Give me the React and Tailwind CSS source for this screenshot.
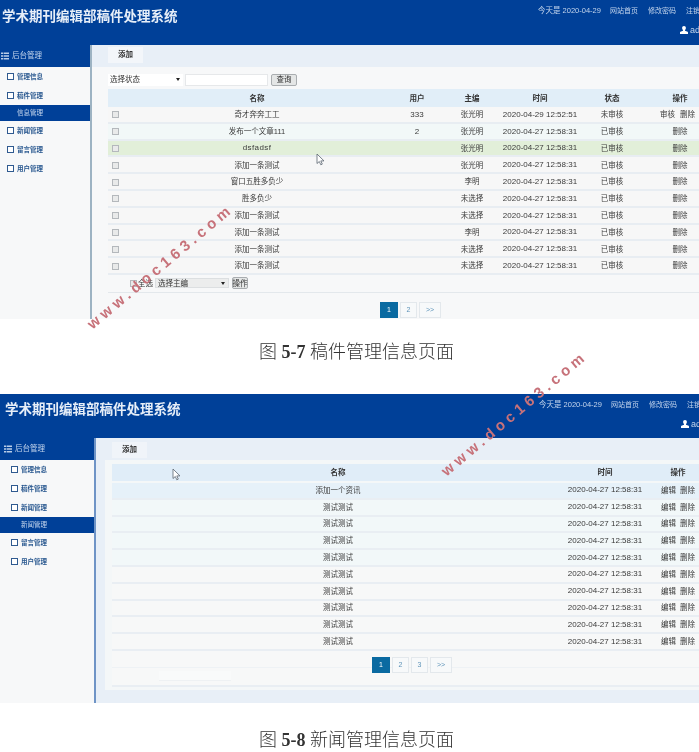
const cjk = "font-['Liberation_Sans','Noto_Sans_CJK_SC',sans-serif]";

const articles = [
  { name: "奇才奔奔工工", user: "333", editor: "张光明", time: "2020-04-29 12:52:51", status: "未审核", ops: true },
  { name: "发布一个文章111", user: "2", editor: "张光明", time: "2020-04-27 12:58:31", status: "已审核", alt: true },
  { name: "dsfadsf", editor: "张光明", time: "2020-04-27 12:58:31", status: "已审核", hover: true },
  { name: "添加一条测试", editor: "张光明", time: "2020-04-27 12:58:31", status: "已审核" },
  { name: "窗口五胜多负少", editor: "李明", time: "2020-04-27 12:58:31", status: "已审核" },
  { name: "胜多负少", editor: "未选择", time: "2020-04-27 12:58:31", status: "已审核" },
  { name: "添加一条测试", editor: "未选择", time: "2020-04-27 12:58:31", status: "已审核" },
  { name: "添加一条测试", editor: "李明", time: "2020-04-27 12:58:31", status: "已审核" },
  { name: "添加一条测试", editor: "未选择", time: "2020-04-27 12:58:31", status: "已审核" },
  { name: "添加一条测试", editor: "未选择", time: "2020-04-27 12:58:31", status: "已审核" },
];

const news = ["添加一个资讯", ...Array(9).fill("测试测试")];

const ListIcon = () => (
  <svg width="8" height="8" viewBox="0 0 8 8" className="shrink-0">
    <path fill="#b9cde8" d="M0 0.5h2v1.6H0zM2.6 0.5H8v1.6H2.6zM0 3.2h2v1.6H0zM2.6 3.2H8v1.6H2.6zM0 5.9h2v1.6H0zM2.6 5.9H8v1.6H2.6z" />
  </svg>
);

const UserIcon = () => (
  <svg width="8" height="8" viewBox="0 0 8 8" className="shrink-0">
    <path fill="#ffffff" d="M4 0c1.2 0 1.9.9 1.9 2.1 0 .9-.4 1.6-.9 2v.6l2.6 1.1c.3.1.4.4.4.7V8H0V6.5c0-.3.1-.6.4-.7L3 4.7v-.6c-.5-.4-.9-1.1-.9-2C2.100.9 2.800 0 4 0z" />
  </svg>
);

const Cursor = ({ className }) => (
  <svg width="9" height="13" viewBox="0 0 9 13" className={`absolute ${className}`}>
    <path fill="#ffffff" stroke="#5a6470" strokeWidth="0.8" d="M1 1v9.500l2.300-2 1.500 3.300 1.500-.7-1.500-3.200H8z" />
  </svg>
);

const Header = ({ h, titleClass, rightClass }) => (
  <div className={`flex justify-between bg-[#004098] ${h}`}>
    <div className={`text-[13.500px] leading-[18px] font-bold text-[#e6eef8] whitespace-nowrap ${titleClass}`}>
      学术期刊编辑部稿件处理系统
    </div>
    <div className={`flex flex-col items-start shrink-0 pt-[6px] text-[7px] leading-[10px] text-[#c3d5ec] ${rightClass}`}>
      <div className="flex whitespace-nowrap">
        <span className="w-[72px] text-[7.500px]">今天是 2020-04-29</span>
        <span className="w-[38px]">网站首页</span>
        <span className="w-[38px]">修改密码</span>
        <span>注销</span>
      </div>
      <div className="flex items-center gap-[2px] mt-[9px] ml-[142px] text-[9px] whitespace-nowrap">
        <UserIcon />
        <span>ad</span>
      </div>
    </div>
  </div>
);

const Sidebar = ({ width, border, sub, active, headClass, itemClass, subClass }) => {
  const before = ["管理信息", "稿件管理"];
  const after = ["留言管理", "用户管理"];
  if (active === "新闻管理") before.push("新闻管理");
  else after.unshift("新闻管理");

  const Item = ({ label }) => (
    <div className={`flex items-center gap-[3px] h-[19px] text-[6.500px] font-bold text-[#28578f] whitespace-nowrap ${itemClass}`}>
      <span className="w-[7px] h-[7px] border border-[#2f5a90] bg-white shrink-0" />
      {label}
    </div>
  );

  return (
    <div className={`flex flex-col shrink-0 bg-[#f7f8f9] border-r-2 ${width} ${border}`}>
      <div className={`flex items-center gap-[3px] h-[22px] bg-[#004098] text-[7.500px] text-[#c3d5ec] whitespace-nowrap ${headClass}`}>
        <ListIcon />
        后台管理
      </div>
      {before.map((label) => (
        <Item key={label} label={label} />
      ))}
      <div className={`flex items-center h-[16px] bg-[#004098] text-[6.500px] text-[#c3d5ec] whitespace-nowrap ${subClass}`}>
        {sub}
      </div>
      {after.map((label) => (
        <Item key={label} label={label} />
      ))}
    </div>
  );
};

const Checkbox = () => (
  <span className="block w-[7px] h-[7px] border border-[#b4b8bc] bg-[#e9eaea]" />
);

const Caret = () => (
  <span className="w-0 h-0 border-x-[2px] border-t-[3px] border-x-transparent border-t-[#222]" />
);

const ArticleRow = ({ row }) => {
  const bg = row.hover ? "bg-[#e2efd9]" : row.alt ? "bg-[#f2f8f8]" : "bg-[#f7f7f7]";
  return (
    <div className={`grid grid-cols-[16px_266px_54px_56px_80px_64px_72px] items-center h-[16.800px] pt-[1px] border-b-2 border-[#e8edf2] text-center text-[7.500px] text-[#3a3a3a] ${bg}`}>
      <span className="pl-[4px]">
        <Checkbox />
      </span>
      <span className={row.hover ? "text-[8px] tracking-[0.4px]" : ""}>{row.name}</span>
      <span className="text-[8px]">{row.user}</span>
      <span>{row.editor}</span>
      <span className="text-[8px] whitespace-nowrap">{row.time}</span>
      <span>{row.status}</span>
      {row.ops ? (
        <span className="flex justify-center gap-[5px] -ml-[5px] whitespace-nowrap">
          <span>审核</span>
          <span>删除</span>
        </span>
      ) : (
        <span>删除</span>
      )}
    </div>
  );
};

const Pager = ({ pages, className }) => (
  <div className={`flex gap-[2px] ${className}`}>
    {pages.map((page, i) => (
      <span
        key={page}
        className={`flex items-center justify-center h-[16px] text-[7px] border ${
          i === 0
            ? "w-[18px] bg-[#0a6aa1] border-[#0a6aa1] text-white"
            : page === ">>"
              ? "w-[22px] bg-[#f7f9fa] border-[#e3e8ec] text-[#5d93b8]"
              : "w-[17px] bg-[#f7f9fa] border-[#e3e8ec] text-[#5d93b8]"
        }`}
      >
        {page}
      </span>
    ))}
  </div>
);

const ArticlesPage = () => (
  <div className="relative flex flex-col h-[319px] overflow-hidden">
    <Header h="h-[45px]" titleClass="pt-[8px] pl-[2px]" rightClass="w-[161px]" />
    <div className="flex flex-1 min-h-0">
      <Sidebar
        width="w-[92px]"
        border="border-[#9db3c3]"
        sub="信息管理"
        active="信息管理"
        headClass="pl-[1px]"
        itemClass="pl-[7px]"
        subClass="pl-[17px]"
      />
      <div className="flex-1 min-w-0 bg-[#f7f8f9]">
        <div className="flex h-[22px] pl-[16px] pt-[2px] bg-[#e8eff7]">
          <div className="flex items-center justify-center w-[35px] h-[16px] bg-[#f3f6fa] text-[7.500px] font-bold text-[#333]">
            添加
          </div>
        </div>
        <div className="w-[608px] ml-[16px]">
          <div className="flex items-center h-[22px] pt-[3px] text-[7.500px] text-[#333]">
            <div className="flex items-center justify-between w-[75px] h-[12px] pl-[2px] pr-[3px] bg-white">
              选择状态
              <Caret />
            </div>
            <div className="w-[83px] h-[12px] ml-[2px] bg-white border border-[#e6e8ea]" />
            <div className="flex items-center justify-center w-[26px] h-[12px] ml-[3px] bg-[#e4e6e6] border border-[#a9adb0] rounded-[2px]">
              查询
            </div>
          </div>
          <div className="grid grid-cols-[16px_266px_54px_56px_80px_64px_72px] items-center h-[18px] pt-[1px] bg-[#e1eef8] text-center text-[7.500px] font-bold text-[#333]">
            <span />
            <span>名称</span>
            <span>用户</span>
            <span>主编</span>
            <span>时间</span>
            <span>状态</span>
            <span>操作</span>
          </div>
          {articles.map((row, i) => (
            <ArticleRow key={i} row={row} />
          ))}
          <div className="flex items-center h-[18px] pl-[22px] border-b border-[#e3e8ec] text-[7.500px] text-[#333]">
            <Checkbox />
            <span className="ml-[1px] w-[14px] whitespace-nowrap">全选</span>
            <div className="flex items-center justify-between w-[74px] h-[10px] ml-[3px] pl-[2px] pr-[3px] bg-[#eceded] border border-[#dcdfe1]">
              选择主编
              <Caret />
            </div>
            <div className="flex items-center justify-center w-[16px] h-[12px] ml-[3px] bg-[#e4e6e6] border border-[#a9adb0] rounded-[2px] whitespace-nowrap">
              操作
            </div>
          </div>
          <Pager pages={["1", "2", ">>"]} className="mt-[9px] ml-[272px]" />
        </div>
      </div>
    </div>
    <Cursor className="left-[316px] top-[153px]" />
  </div>
);

const NewsPage = () => (
  <div className="relative flex flex-col h-[309px] overflow-hidden">
    <Header h="h-[44px]" titleClass="pt-[7px] pl-[5px]" rightClass="w-[160px]" />
    <div className="flex flex-1 min-h-0">
      <Sidebar
        width="w-[96px]"
        border="border-[#6f94c6]"
        sub="新闻管理"
        active="新闻管理"
        headClass="pl-[4px]"
        itemClass="pl-[11px]"
        subClass="pl-[21px]"
      />
      <div className="flex-1 min-w-0 bg-[#e8eff7]">
        <div className="flex h-[22px] pl-[16px] pt-[4px]">
          <div className="flex items-center justify-center w-[35px] h-[16px] bg-[#f0f4f9] text-[7.500px] font-bold text-[#333]">
            添加
          </div>
        </div>
        <div className="h-[230px] ml-[9px] pl-[7px] pt-[4px] bg-[#f4f7f8]">
          <div className="grid grid-cols-[452px_82px_64px] items-center h-[17px] mb-[2px] bg-[#e0edf8] text-center text-[7.500px] font-bold text-[#333]">
            <span>名称</span>
            <span>时间</span>
            <span>操作</span>
          </div>
          {news.map((name, i) => (
            <div
              key={i}
              className={`grid grid-cols-[452px_82px_64px] items-center h-[16.800px] border-b-2 border-[#e9eef3] text-center text-[7.500px] text-[#3a3a3a] ${
                i === 0 ? "bg-[#e6f1f9]" : i < 5 ? "bg-[#f2f8f9]" : "bg-[#f7f8f8]"
              }`}
            >
              <span>{name}</span>
              <span className="text-[8px] whitespace-nowrap">2020-04-27 12:58:31</span>
              <span className="flex justify-center gap-[4px] whitespace-nowrap">
                <span>编辑</span>
                <span>删除</span>
              </span>
            </div>
          ))}
          <div className="relative">
            <div className="h-[17px] border-b border-[#eef2f5] bg-[#f7f8f8]" />
            <div className="flex items-center h-[19px] pl-[47px] border-b-2 border-[#e9eef3] bg-[#f7f8f8]">
              <div className="w-[72px] h-[10px] bg-[#f9fafa] border-b border-[#eef1f3]" />
            </div>
            <Pager pages={["1", "2", "3", ">>"]} className="absolute left-[260px] top-[6px]" />
          </div>
        </div>
      </div>
    </div>
    <Cursor className="left-[172px] top-[74px]" />
  </div>
);

const Caption = ({ children, className }) => (
  <div className={`flex justify-center pl-[14px] text-[18px] leading-[24px] text-[#333] font-['Liberation_Serif','Noto_Sans_CJK_SC',serif] font-light ${className}`}>
    {children}
  </div>
);

const Watermark = ({ className }) => (
  <span className={`absolute -translate-x-1/2 -translate-y-1/2 -rotate-[40deg] text-[15px] leading-none font-bold tracking-[4.300px] whitespace-nowrap text-[#c7727a] ${className}`}>
    www.doc163.com
  </span>
);

export default function App() {
  return (
    <div className={`relative w-[699px] h-[752px] overflow-hidden bg-white ${cjk} blur-[0.35px]`}>
      <ArticlesPage />
      <Caption className="h-[75px] pt-[21px]">
        <span>图 <b className="font-bold">5-7</b> 稿件管理信息页面</span>
      </Caption>
      <NewsPage />
      <Caption className="h-[49px] pt-[25px]">
        <span>图 <b className="font-bold">5-8</b> 新闻管理信息页面</span>
      </Caption>
      <Watermark className="left-[160px] top-[266px]" />
      <Watermark className="left-[514px] top-[413px]" />
    </div>
  );
}
